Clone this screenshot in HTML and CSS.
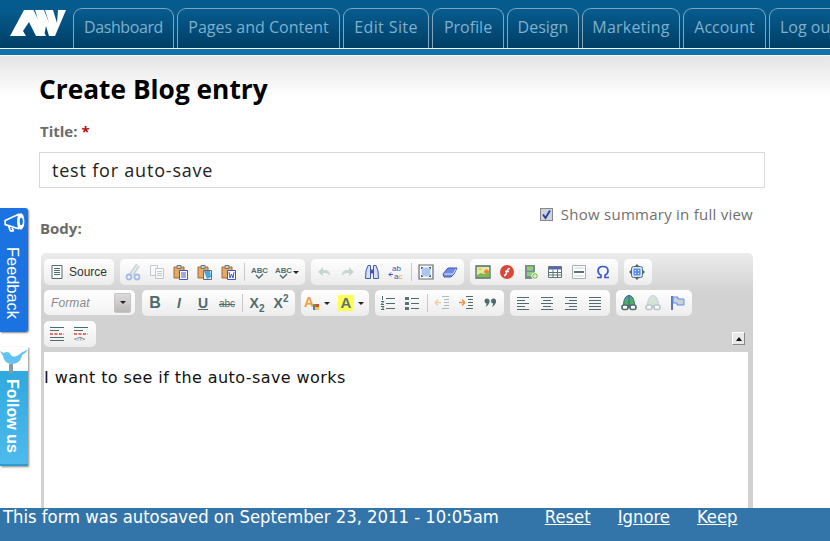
FILE: index.html
```html
<!DOCTYPE html>
<html lang="en">
<head>
<meta charset="utf-8">
<title>Create Blog entry</title>
<link rel="stylesheet" href="styles.css">
</head>
<body>
<header class="topbar">
  <svg class="logo" viewBox="10 9 56 27" width="56" height="27"><path fill="#fff" d="M10 36 24 10h9.500L46 36H36L29 22l-6 9 3 5zM35 10h9l5 13-4-13h8l4 13 1-13h8L55 36h-6l-3-10-2 10h-1z"/></svg>
  <nav class="tabs">
    <a class="tab">Dashboard</a>
    <a class="tab">Pages and Content</a>
    <a class="tab">Edit Site</a>
    <a class="tab">Profile</a>
    <a class="tab">Design</a>
    <a class="tab">Marketing</a>
    <a class="tab">Account</a>
    <a class="tab">Log out</a>
  </nav>
</header>
<div class="stripe"></div>
<main class="page">
  <h1>Create Blog entry</h1>
  <label class="label">Title: <span class="req">*</span></label>
  <div class="input">test for auto-save</div>
  <div class="summary-row">
    <span class="label body-label">Body:</span>
    <span class="summary"><span class="check"><svg viewBox="0 0 11 11" width="11" height="11"><path d="M2 5.500 4.500 9 9 1.500" fill="none" stroke="#2a3f9e" stroke-width="1.800"/></svg></span>Show summary in full view</span>
  </div>
  <section class="editor">
    <div class="tb-row">
      <div class="grp source">
        <svg viewBox="0 0 16 16" width="16" height="16"><path d="M3 1.500h10v13H3z" fill="#fff" stroke="#4f6b6b"/><path d="M5 4.500h6M5 6.500h6M5 8.500h6M5 10.500h6" stroke="#4f6b6b"/></svg>
        <span>Source</span>
      </div>
      <div class="grp">
        <span class="btn off"><svg viewBox="0 0 16 16"><path d="M12 0 5 10M14 2 8 11" stroke="#8aa" stroke-width="2"/><circle cx="4" cy="13" r="2.500" fill="none" stroke="#3f6fd0" stroke-width="1.800"/><circle cx="12" cy="13" r="2.500" fill="none" stroke="#3f6fd0" stroke-width="1.800"/></svg></span>
        <span class="btn off"><svg viewBox="0 0 16 16"><path d="M1.500 1.500h7v10h-7z" fill="#fff" stroke="#789"/><path d="M6.500 4.500h8v10h-8z" fill="#fff" stroke="#789"/><path d="M8 7.500h5M8 9.500h5M8 11.500h5" stroke="#789"/></svg></span>
        <span class="btn"><svg viewBox="0 0 16 16"><path d="M1 3h10v11H1z" fill="#e5a868" stroke="#a56a2c"/><path d="M4 1.500h4v3H4z" fill="#ccc" stroke="#777"/><path d="M6.500 6.500h8v9h-8z" fill="#fff" stroke="#3a56c8"/><path d="M8 9h5M8 11h5M8 13h5" stroke="#3a56c8"/></svg></span>
        <span class="btn"><svg viewBox="0 0 16 16"><path d="M1 3h10v11H1z" fill="#e5a868" stroke="#a56a2c"/><path d="M4 1.500h4v3H4z" fill="#ccc" stroke="#777"/><path d="M6.500 6.500h8v9h-8z" fill="#eee" stroke="#667"/><path d="M7 7h6l1 6-4 2z" fill="#3fa9e0"/></svg></span>
        <span class="btn"><svg viewBox="0 0 16 16"><path d="M1 3h10v11H1z" fill="#e5a868" stroke="#a56a2c"/><path d="M4 1.500h4v3H4z" fill="#ccc" stroke="#777"/><path d="M6.500 6.500h8v9h-8z" fill="#fff" stroke="#3a56c8"/><path d="M8 8l1 6 1.500-4 1.500 4 1-6" fill="none" stroke="#3a56c8"/></svg></span>
        <i class="sep"></i>
        <span class="btn"><svg viewBox="0 0 16 16"><text x="0" y="9" class="abc">ABC</text><path d="M5 11l3 3 4-4" fill="none" stroke="#4f6b6b" stroke-width="1.400"/></svg></span>
        <span class="btn arrow"><svg viewBox="0 0 16 16"><text x="0" y="9" class="abc">ABC</text><path d="M5 11l3 3 4-4" fill="none" stroke="#4f6b6b" stroke-width="1.400"/></svg><b class="caret"></b></span>
      </div>
      <div class="grp tight">
        <span class="btn off"><svg viewBox="0 0 16 16"><path d="M2 8l5-5v3h2c4 0 5 3 5 6-1-2-3-3-5-3H7v3z" fill="#8fa5a5"/></svg></span>
        <span class="btn off"><svg viewBox="0 0 16 16"><path d="M14 8 9 3v3H7c-4 0-5 3-5 6 1-2 3-3 5-3h2v3z" fill="#8fa5a5"/></svg></span>
        <span class="btn"><svg viewBox="0 0 16 16"><path d="M2 7 4 1.500h2.500v13H1.500zM14 7 12 1.500H9.500v13h5z" fill="#dde" stroke="#3e58b8"/><path d="M6.500 5.500h3v4h-3z" fill="#3e58b8"/></svg></span>
        <span class="btn"><svg viewBox="0 0 16 16"><text x="4" y="7" class="rep">ab</text><text x="6" y="15" class="rep">a<tspan class="or">c</tspan></text><path d="M1 10.500h4M1 10.500l2-2M1 10.500l2 2" stroke="#3e58b8" fill="none"/></svg></span>
        <i class="sep"></i>
        <span class="btn"><svg viewBox="0 0 16 16"><path d="M1 1h14v14H1z" fill="#fff" stroke="#667" stroke-width="1.200"/><path d="M3.500 3.500h9v9h-9z" fill="#a9c6ee"/><path d="M3 3h2v1H4v1H3zM11 3h2v2h-1V4h-1zM3 11h1v1h1v1H3zM12 11h1v2h-2v-1h1z" fill="#4f6b6b"/></svg></span>
        <span class="btn"><svg viewBox="0 0 16 16"><path d="M1 10 6 4h9l-3 6 -3 3H2z" fill="#6e8ce6" stroke="#3e58b8"/><path d="M2 10h9l3-5" fill="none" stroke="#dfe6fb"/></svg></span>
      </div>
      <div class="grp">
        <span class="btn"><svg viewBox="0 0 16 16"><path d="M1 2h14v12H1z" fill="#dfe9a8" stroke="#4f6b6b" stroke-width="1.300"/><path d="M2 11l4-2 3 1 5-2v5H2z" fill="#82b94f"/><path d="M9 7l2.500-2 2.500 2v2H9z" fill="#e58a3c"/><circle cx="5" cy="5" r="1.500" fill="#f5d040"/></svg></span>
        <span class="btn"><svg viewBox="0 0 16 16"><circle cx="8" cy="8" r="7" fill="#d9473a"/><path d="M11 4.500C8 4.500 8 7 7.500 9S6.500 11.500 5 11.500M6 7.500h4" fill="none" stroke="#fff" stroke-width="1.500"/></svg></span>
        <span class="btn"><svg viewBox="0 0 16 16"><path d="M2 1h10v14H2z" fill="#7b8c8c"/><path d="M4 2.500h6v4H4zM4 8h6v4H4z" fill="#8ccf78"/><circle cx="12" cy="12" r="3.300" fill="#7cb84a" stroke="#fff"/><path d="M12 10v4M10 12h4" stroke="#fff"/></svg></span>
        <span class="btn"><svg viewBox="0 0 16 16"><path d="M1.500 2.500h13v11h-13z" fill="#fff" stroke="#607575"/><path d="M2 3h12v2.500H2z" fill="#5569a8"/><path d="M1.500 8.500h13M1.500 11h13M6 5.500v8M10.500 5.500v8" stroke="#607575"/></svg></span>
        <span class="btn"><svg viewBox="0 0 16 16"><path d="M1.500 1.500h13v13h-13z" fill="#fff" stroke="#a5afaf"/><path d="M3.500 4h9M3.500 12h9" stroke="#c5cccc"/><path d="M3 7h10v2H3z" fill="#5d7373"/></svg></span>
        <span class="btn"><svg viewBox="0 0 16 16"><path d="M2 13.500h4v-2.200C4 10.300 3 8.500 3 6.800 3 4 5.200 2.500 8 2.500s5 1.500 5 4.300c0 1.700-1 3.500-3 4.500v2.200h4" fill="none" stroke="#3e58c8" stroke-width="1.700"/></svg></span>
      </div>
      <div class="grp">
        <span class="btn"><svg viewBox="0 0 16 16"><path d="M8 0l2 2H6zM8 16l-2-2h4zM0 8l2-2v4zM16 8l-2 2V6z" fill="#4f6b6b"/><rect x="2.500" y="2.500" width="11" height="11" rx="2" fill="#dce6f5" stroke="#4f6b6b"/><rect x="4.500" y="4.500" width="7" height="7" fill="#5a92f0"/><path d="M6 6h1v1H6zM9 6h1v1H9zM6 9h1v1H6zM9 9h1v1H9z" fill="#fff"/></svg></span>
      </div>
    </div>
    <div class="tb-row">
      <div class="combo"><em>Format</em><span class="combo-btn"><b class="caret"></b></span></div>
      <div class="grp tight">
        <span class="btn fmt bold">B</span>
        <span class="btn fmt ital">I</span>
        <span class="btn fmt under">U</span>
        <span class="btn fmt strike">abc</span>
        <i class="sep"></i>
        <span class="btn fmt script">X<sub>2</sub></span>
        <span class="btn fmt script">X<sup>2</sup></span>
      </div>
      <div class="grp colors">
        <span class="color"><svg viewBox="0 0 16 16" width="16" height="16"><text x="0" y="12" class="big-a or">A</text><path d="M9 9h3v3H9z" fill="#4aa64a"/><path d="M12 9h3v3h-3z" fill="#d9473a"/><path d="M9 12h2v3H9z" fill="#3e7fe0"/><path d="M11 12h2v3h-2zM13 12h2v3h-2z" fill="#f2c83c"/></svg><b class="caret"></b></span>
        <span class="color"><span class="hl">A</span><b class="caret"></b></span>
      </div>
      <div class="grp tight">
        <span class="btn"><svg viewBox="0 0 16 16"><path d="M6 3.500h9M6 8.500h9M6 13.500h9" stroke="#4f6b6b"/><path d="M2.500 1v4M1 6.500h3L1 9.500h3M1 11.500h3l-1.500 1.500L4 14.500H1" fill="none" stroke="#4f6b6b"/></svg></span>
        <span class="btn"><svg viewBox="0 0 16 16"><path d="M1 2h4v3H1zM1 7h4v3H1zM1 12h4v3H1z" fill="#5d7373"/><path d="M7 3.500h8M7 8.500h8M7 13.500h8" stroke="#4f6b6b"/></svg></span>
        <i class="sep"></i>
        <span class="btn off"><svg viewBox="0 0 16 16"><path d="M8 1.500h7M10 4.500h5M10 7.500h5M10 10.500h5M8 13.500h7" stroke="#4f6b6b"/><path d="M1 7.500h6M1 7.500l3-3M1 7.500l3 3" fill="none" stroke="#f0903c" stroke-width="1.300"/></svg></span>
        <span class="btn"><svg viewBox="0 0 16 16"><path d="M8 1.500h7M10 4.500h5M10 7.500h5M10 10.500h5M8 13.500h7" stroke="#4f6b6b"/><path d="M1 7.500h6M7 7.500l-3-3M7 7.500l-3 3" fill="none" stroke="#f0903c" stroke-width="1.300"/></svg></span>
        <span class="btn"><svg viewBox="0 0 16 16"><circle cx="5" cy="6" r="2.500" fill="#4f6b6b"/><path d="M7.500 6c0 3-2 5-4 6 1-2 1-3 1-4z" fill="#4f6b6b"/><circle cx="11.500" cy="6" r="2.500" fill="#4f6b6b"/><path d="M14 6c0 3-2 5-4 6 1-2 1-3 1-4z" fill="#4f6b6b"/></svg></span>
      </div>
      <div class="grp">
        <span class="btn"><svg viewBox="0 0 16 16"><path d="M2 2.500h12M2 5.500h8M2 8.500h12M2 11.500h8M2 14.500h12" stroke="#4f6b6b"/></svg></span>
        <span class="btn"><svg viewBox="0 0 16 16"><path d="M2 2.500h12M4 5.500h8M2 8.500h12M4 11.500h8M2 14.500h12" stroke="#4f6b6b"/></svg></span>
        <span class="btn"><svg viewBox="0 0 16 16"><path d="M2 2.500h12M6 5.500h8M2 8.500h12M6 11.500h8M2 14.500h12" stroke="#4f6b6b"/></svg></span>
        <span class="btn"><svg viewBox="0 0 16 16"><path d="M2 2.500h12M2 5.500h12M2 8.500h12M2 11.500h12M2 14.500h12" stroke="#4f6b6b"/></svg></span>
      </div>
      <div class="grp">
        <span class="btn"><svg viewBox="0 0 16 16"><path d="M2.500 10.500C2.500 4 5 .5 8 .5s5.500 3.500 5.500 10z" fill="#4caf5a" stroke="#3e58c8"/><path d="M8 .5v10" stroke="#3e58c8"/><rect x="1" y="10" width="6" height="4.500" rx="2" fill="#fff" stroke="#4f6b6b" stroke-width="1.600"/><rect x="9" y="10" width="6" height="4.500" rx="2" fill="#fff" stroke="#4f6b6b" stroke-width="1.600"/><path d="M6 12h4" stroke="#4f6b6b" stroke-width="1.500"/></svg></span>
        <span class="btn off"><svg viewBox="0 0 16 16"><path d="M2.500 10.500C2.500 4 5 .5 8 .5s5.500 3.500 5.500 10z" fill="#a8c9a8" stroke="#8098d8"/><rect x="1" y="10" width="6" height="4.500" rx="2" fill="#fff" stroke="#789" stroke-width="1.600"/><rect x="9" y="10" width="6" height="4.500" rx="2" fill="#fff" stroke="#789" stroke-width="1.600"/><path d="M6 12h4" stroke="#789" stroke-width="1.500"/></svg></span>
        <span class="btn"><svg viewBox="0 0 16 16"><path d="M3 1v14" stroke="#4c62c0" stroke-width="1.800"/><path d="M4 2h5v2h6v6H8V8H4z" fill="#c9d2d6" stroke="#5b8ee6"/></svg></span>
      </div>
    </div>
    <div class="tb-row">
      <div class="grp">
        <span class="btn"><svg viewBox="0 0 16 16"><path d="M1 1.500h14M1 4.500h9M1 11.500h14M1 14.500h14" stroke="#4f6b6b"/><path d="M1 8h14" stroke="#d9473a" stroke-width="1.400" stroke-dasharray="3 1.500"/></svg></span>
        <span class="btn"><svg viewBox="0 0 16 16"><path d="M1 1.500h14M1 4.500h9" stroke="#4f6b6b"/><path d="M1 8h14" stroke="#d9473a" stroke-width="1.400" stroke-dasharray="3 1.500"/><text x="1" y="15" class="tiny">&lt;!?&gt;</text></svg></span>
      </div>
      <span class="collapse"><b class="caret up"></b></span>
    </div>
    <div class="content">I want to see if the auto-save works</div>
  </section>
</main>

<aside class="feedback">
  <svg viewBox="0 0 24 24" width="25" height="25"><path d="M3 10l13-6v14L3 14zM6 14.500l2 5.500h3l-2-4.500" fill="none" stroke="#fff" stroke-width="1.600" stroke-linejoin="round"/><ellipse cx="18" cy="11" rx="3.500" ry="8" fill="#fff"/><ellipse cx="18.500" cy="11" rx="1.500" ry="3.500" fill="#1a73e0"/></svg>
  <span class="side-text">Feedback</span>
</aside>
<aside class="follow">
  <svg class="bird" viewBox="0 0 28 24" width="28" height="24"><path d="M9 15h4v9H9z" fill="#8a9a9e"/><path d="M0 2l4 2c2-2 6-1 7 2 3 3 7 1 10-2 2-1 5-3 7-3-2 2-4 4-6 5-1 6-5 9-10 9S4 12 3 7z" fill="#63c3ee"/></svg>
  <span class="side-text">Follow us</span>
</aside>

<footer class="autosave">
  <span class="msg">This form was autosaved on September 23, 2011 - 10:05am</span>
  <a>Reset</a><a>Ignore</a><a>Keep</a>
</footer>
</body>
</html>
```

FILE: styles.css
```css
* { box-sizing: border-box; }
html, body { margin: 0; height: 100%; overflow: hidden; background: #fff; }
body { font-family: "Open Sans", "DejaVu Sans", sans-serif; position: relative; }

.topbar {
  height: 49px;
  display: flex;
  align-items: flex-end;
  padding-left: 10px;
  background: linear-gradient(#065b8e 0, #065b8e 10px, #003f66 48px);
  border-bottom: 1px solid #fff;
  overflow: hidden;
}
.logo { margin: 0 7px 12px 0; flex: none; }
.tabs { display: flex; gap: 3px; flex: none; }
.tab {
  width: 72px;
  height: 40px;
  border: 1px solid #7fa6bd;
  border-bottom: 0;
  border-radius: 9px 9px 0 0;
  color: #7fb0cd;
  font-size: 16px;
  font-weight: 500;
  line-height: 37px;
  text-align: center;
  white-space: nowrap;
}
.tab:nth-child(1) { width: 101px; letter-spacing: -.4px; }
.tab:nth-child(2) { width: 163px; }
.tab:nth-child(3) { width: 86px; letter-spacing: .4px; }
.tab:nth-child(6) { width: 98px; letter-spacing: .2px; }
.tab:nth-child(7) { width: 83px; }
.tab:nth-child(8) { width: 90px; padding-left: 10px; text-align: left; overflow: visible; }
.stripe { height: 7px; background: #1172ab; border-bottom: 1px solid #fff; }

.page {
  padding: 14px 0 0 39px;
  height: 485px;
  background: linear-gradient(#e5e5e5 0, #fff 40px);
}
h1 { margin: 0; font-size: 26.300px; line-height: 38px; font-weight: 700; color: #000; }
.label { display: block; margin: 13px 0 0 1px; font-size: 15px; line-height: 20px; font-weight: 700; color: #6b6b6b; }
.req { color: #a11; }
.input {
  width: 726px;
  height: 36px;
  margin-top: 11px;
  padding-left: 12px;
  border: 1px solid #d9d9d9;
  font-size: 18px;
  letter-spacing: .8px;
  line-height: 34px;
  color: #222;
  background: #fff;
}
.summary-row { width: 713px; display: flex; justify-content: space-between; margin-left: 1px; height: 65px; }
.body-label { margin: 30px 0 0; }
.summary { margin: 16px 0 0; display: flex; align-items: center; height: 20px; font-size: 15px; letter-spacing: .25px; color: #707070; }
.check {
  width: 13px; height: 13px; margin-right: 8px;
  border: 1px solid #888; background: #cfd3e0;
  display: flex; align-items: center; justify-content: center;
}

.editor {
  width: 712px;
  margin-left: 2px;
  padding: 6px 3px 0 3px;
  background: linear-gradient(#ececec 0, #d2d2d2 40px);
  border-radius: 5px 5px 0 0;
  height: 300px;
}
.tb-row { display: flex; gap: 6px; height: 26px; margin-bottom: 5px; position: relative; }
.grp {
  display: flex;
  align-items: center;
  padding: 0 3px 0 1px;
  border-radius: 5px;
  background: linear-gradient(#fff, #ececec);
}
.tight { padding-right: 2px; }
.source { width: 70px; padding-left: 5px; gap: 4px; font: 12px "Liberation Sans", Arial, sans-serif; color: #333; }
.btn { width: 24px; height: 26px; display: flex; align-items: center; justify-content: center; flex: none; color: #4f6b6b; }
.btn svg { width: 16px; height: 16px; display: block; overflow: visible; }
.btn.arrow { width: 31px; justify-content: flex-start; padding-left: 4px; gap: 2px; }
.off { opacity: .42; }
.sep { width: 1px; height: 18px; margin: 0 2px 0 3px; background: #c8c8c8; flex: none; }
.caret { display: inline-block; width: 0; height: 0; border: 3px solid transparent; border-top: 3px solid #222; border-bottom: 0; flex: none; }
.caret.up { border-top: 0; border-bottom: 4px solid #111; }

svg text { font-family: "Liberation Sans", Arial, sans-serif; }
.abc { font-size: 7.800px; font-weight: 700; fill: #4f6b6b; }
.rep { font-size: 8px; fill: #3e58b8; }
.or { fill: #f0a040; }
.big-a { font-size: 14px; font-weight: 700; }
.tiny { font-size: 5.500px; fill: #333; }

.combo {
  width: 91px; height: 25px;
  display: flex; align-items: center; justify-content: space-between;
  padding: 0 4px 0 7px;
  border-radius: 5px;
  background: linear-gradient(#fff, #f2f2f2);
  margin-right: 1px;
}
.combo em { font: italic 12px "Liberation Sans", Arial, sans-serif; letter-spacing: .1px; color: #8a8a8a; }
.combo-btn {
  width: 17px; height: 20px; border-radius: 2px;
  display: flex; align-items: center; justify-content: center;
  background: linear-gradient(#dcdcdc, #bdb8b8);
  border: 1px solid #c8c4c4;
}
.fmt { font-family: "Liberation Sans", Arial, sans-serif; font-size: 14px; font-weight: 700; }
.bold { font-size: 16px; }
.ital { font-style: italic; }
.under { text-decoration: underline; }
.strike { font-size: 10px; font-weight: 400; text-decoration: line-through; }
.script { display: block; font-size: 14px; line-height: 26px; text-align: center; }
.script sub, .script sup { font-size: 10px; line-height: 0; }
.colors { gap: 0; padding: 0; }
.color { width: 34px; display: flex; align-items: center; gap: 4px; padding-left: 3px; flex: none; }
.color svg { display: block; }
.hl {
  width: 16px; height: 16px; display: block; text-align: center;
  background: #ffff55; color: #5d7373;
  font: 700 15px/16px "Liberation Sans", Arial, sans-serif;
}
.collapse {
  position: absolute; right: 5px; top: 11px;
  width: 13px; height: 13px;
  display: flex; align-items: center; justify-content: center;
  background: #e8e8e8; border: 1px solid #888; border-top-color: #fff; border-left-color: #fff;
}
.content {
  width: 704px;
  height: 200px;
  background: #fff;
  padding: 16px 0 0 0;
  font: 16px/20px "DejaVu Sans", Verdana, sans-serif;
  letter-spacing: .42px;
  color: #111;
}

.feedback, .follow {
  position: absolute;
  left: 0;
  width: 28px;
  display: flex;
  flex-direction: column;
  align-items: center;
  overflow: hidden;
  box-shadow: 1px 1px 2px #888;
  color: #fff;
}
.feedback { top: 208px; height: 124px; background: #1a73e0; padding-top: 2px; border-radius: 0 3px 3px 0; }
.feedback svg { flex: none; margin-bottom: 1px; }
.follow { top: 347px; height: 119px; background: linear-gradient(#fff 0, #fff 24px, #2fa9df 24px, #4dbaec 100%); padding-top: 2px; border-bottom: 2px solid #2e9ccf; }
.follow .bird { flex: none; }
.side-text {
  writing-mode: vertical-rl;
  font: 700 14px "Liberation Sans", Arial, sans-serif;
  white-space: nowrap;
  margin-right: 4px;
}
.feedback .side-text { font-weight: 400; font-size: 16.400px; margin-top: 10px; padding-top: 1px; }
.follow .side-text { font-size: 16px; margin-top: 6px; }

.autosave {
  position: absolute;
  left: 0; right: 0; bottom: 0;
  height: 33px;
  background: #3375a9;
  color: #fff;
  padding-left: 3px;
  display: flex;
  align-items: flex-start;
  font: 18.300px/18px "DejaVu Sans Condensed", "DejaVu Sans", sans-serif;
}
.autosave a { text-decoration: underline; margin-right: 27px; }
.msg { margin-right: 46px; }
```
